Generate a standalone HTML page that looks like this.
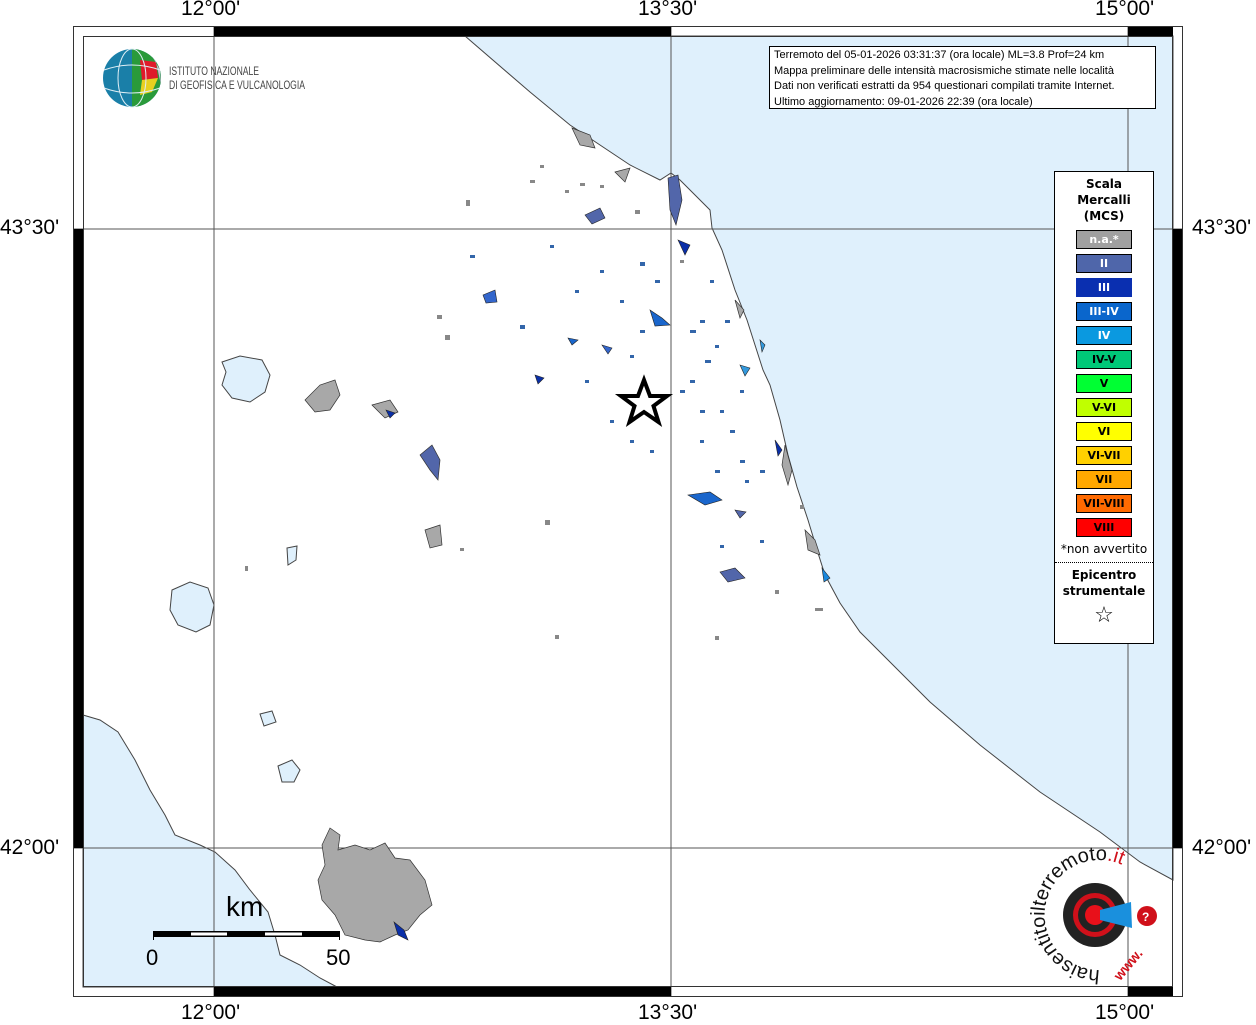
<!DOCTYPE html>
<html><head><meta charset="utf-8"><style>
body{margin:0;background:#fff;width:1256px;height:1024px;overflow:hidden;font-family:"Liberation Sans",sans-serif}
.lab{position:absolute;font-size:21px;color:#000}
.sw{width:56px;height:19px;margin:0 auto 5px;border:1px solid #000;box-sizing:border-box;line-height:17px}
</style></head><body>
<svg width="1256" height="1024" style="position:absolute;left:0;top:0">
<path d="M465,36 L1173,36 L1173,880 L1140,862 L1100,832 L1040,792 L980,745 L930,702 L890,662 L860,632 L840,603 L825,575 L818,553 L808,520 L797,487 L788,455 L780,420 L770,385 L763,370 L755,345 L747,320 L735,290 L722,250 L712,228 L710,210 L695,195 L680,180 L671,173 L660,180 L630,165 L600,145 L570,125 L530,92 Z" fill="#dff0fc" stroke="#444" stroke-width="1"/>
<path d="M83,715 L100,720 L118,732 L135,760 L150,790 L165,815 L175,835 L200,845 L215,852 L235,870 L250,890 L268,912 L275,935 L280,955 L300,965 L320,978 L337,987 L83,987 Z" fill="#dff0fc" stroke="#444" stroke-width="1"/>
<path d="M222,362 L240,356 L262,360 L270,375 L265,392 L250,402 L232,398 L222,385 L226,372 Z" fill="#dff0fc" stroke="#444"/>
<path d="M172,590 L190,582 L208,588 L214,605 L210,625 L196,632 L178,625 L170,610 Z" fill="#dff0fc" stroke="#444"/>
<path d="M260,714 L272,711 L276,722 L264,726 Z" fill="#dff0fc" stroke="#444"/>
<path d="M278,766 L292,760 L300,770 L294,782 L282,782 Z" fill="#dff0fc" stroke="#444"/>
<path d="M287,548 L297,546 L296,560 L288,565 Z" fill="#dff0fc" stroke="#444"/>
<g stroke="#555" stroke-width="1">
<line x1="214" y1="26" x2="214" y2="997"/><line x1="671" y1="26" x2="671" y2="997"/><line x1="1128" y1="26" x2="1128" y2="997"/>
<line x1="73" y1="229" x2="1183" y2="229"/><line x1="73" y1="848" x2="1183" y2="848"/>
</g>
<g fill="#a8a8a8" stroke="#333" stroke-width="0.7">
<path d="M330,828 L340,835 L338,850 L355,845 L370,850 L385,843 L395,858 L410,860 L425,880 L432,905 L420,915 L408,930 L395,935 L380,942 L365,940 L345,935 L335,915 L322,900 L318,880 L325,865 L322,845 Z"/>
<path d="M305,400 L320,385 L335,380 L340,395 L330,410 L315,412 Z"/>
<path d="M420,455 L432,445 L440,460 L438,480 L430,470 Z" fill="#5266aa"/>
<path d="M372,405 L390,400 L398,412 L385,418 Z"/>
<path d="M425,530 L440,525 L442,545 L430,548 Z"/>
<path d="M572,128 L590,135 L595,148 L580,145 Z"/>
<path d="M615,172 L630,168 L625,182 Z"/>
<path d="M785,445 L792,470 L788,485 L782,465 Z"/>
<path d="M805,530 L815,540 L820,555 L808,550 Z"/>
<path d="M735,300 L744,310 L740,318 Z"/>
</g>
<g stroke="#222" stroke-width="0.6">
<path d="M668,178 L678,175 L682,200 L676,225 L670,210 Z" fill="#5266aa"/>
<path d="M585,215 L600,208 L605,218 L592,224 Z" fill="#5266aa"/>
<path d="M483,295 L495,290 L497,302 L486,303 Z" fill="#3366cc"/>
<path d="M688,495 L710,492 L722,500 L705,505 Z" fill="#1a66cc"/>
<path d="M720,572 L735,568 L745,578 L728,582 Z" fill="#5266aa"/>
<path d="M650,310 L662,318 L670,325 L655,326 Z" fill="#1a66cc"/>
<path d="M678,240 L690,245 L685,255 Z" fill="#0a2fa8"/>
<path d="M740,365 L750,368 L745,376 Z" fill="#3399dd"/>
<path d="M822,568 L830,578 L824,582 Z" fill="#1a88dd"/>
<path d="M775,440 L782,450 L778,456 Z" fill="#0a2fa8"/>
<path d="M602,345 L612,348 L608,354 Z" fill="#3366cc"/>
<path d="M535,375 L544,378 L538,384 Z" fill="#0a2fa8"/>
<path d="M568,338 L578,340 L572,345 Z" fill="#1a66cc"/>
<path d="M735,510 L746,512 L740,518 Z" fill="#5266aa"/>
<path d="M386,410 L395,413 L390,418 Z" fill="#0a2fa8"/>
<path d="M394,922 L404,930 L408,940 L398,935 Z" fill="#0a2fa8"/>
<path d="M760,340 L765,345 L762,352 Z" fill="#3399dd"/>
</g>
<g fill="#3366aa">
<rect x="520" y="325" width="5" height="4"/><rect x="470" y="255" width="5" height="3"/><rect x="550" y="245" width="4" height="3"/>
<rect x="640" y="262" width="5" height="4"/><rect x="700" y="320" width="5" height="3"/><rect x="715" y="345" width="4" height="3"/>
<rect x="630" y="355" width="4" height="3"/><rect x="690" y="380" width="5" height="3"/><rect x="720" y="410" width="4" height="3"/>
<rect x="700" y="440" width="4" height="3"/><rect x="650" y="450" width="4" height="3"/><rect x="610" y="420" width="4" height="3"/>
<rect x="745" y="480" width="4" height="3"/><rect x="760" y="540" width="4" height="3"/><rect x="720" y="545" width="4" height="3"/>
<rect x="585" y="380" width="4" height="3"/><rect x="620" y="300" width="4" height="3"/><rect x="740" y="390" width="4" height="3"/>
<rect x="575" y="290" width="4" height="3"/><rect x="600" y="270" width="4" height="3"/><rect x="710" y="280" width="4" height="3"/>
<rect x="690" y="330" width="6" height="3"/><rect x="725" y="320" width="5" height="3"/><rect x="705" y="360" width="6" height="3"/>
<rect x="730" y="430" width="5" height="3"/><rect x="760" y="470" width="5" height="3"/><rect x="700" y="410" width="5" height="3"/>
<rect x="655" y="280" width="5" height="3"/><rect x="640" y="330" width="5" height="3"/><rect x="680" y="390" width="5" height="3"/>
<rect x="630" y="440" width="4" height="3"/><rect x="740" y="460" width="5" height="3"/><rect x="715" y="470" width="5" height="3"/>
</g>
<g fill="#888">
<rect x="545" y="520" width="5" height="5"/><rect x="466" y="200" width="4" height="6"/><rect x="445" y="335" width="5" height="5"/>
<rect x="437" y="315" width="5" height="4"/><rect x="540" y="165" width="4" height="3"/><rect x="565" y="190" width="4" height="3"/>
<rect x="635" y="210" width="5" height="4"/><rect x="800" y="505" width="4" height="4"/><rect x="775" y="590" width="4" height="4"/>
<rect x="815" y="608" width="8" height="3"/><rect x="555" y="635" width="4" height="4"/><rect x="715" y="636" width="4" height="4"/>
<rect x="245" y="566" width="3" height="5"/><rect x="460" y="548" width="4" height="3"/><rect x="680" y="260" width="4" height="3"/>
<rect x="530" y="180" width="5" height="3"/><rect x="580" y="183" width="5" height="3"/><rect x="600" y="185" width="4" height="3"/>
</g>
<path d="M644,380 L650,396 L667,396 L653.5,406 L658.5,422 L644,412 L629.5,422 L634.5,406 L621,396 L638,396 Z" fill="#fff" stroke="#000" stroke-width="4" stroke-linejoin="miter"/>
<rect x="73.5" y="26.5" width="1109" height="970" fill="none" stroke="#333"/>
<rect x="83.5" y="36.5" width="1089" height="950" fill="none" stroke="#333"/>
<g fill="#000">
<rect x="214" y="27" width="457" height="9"/><rect x="1128" y="27" width="45" height="9"/>
<rect x="214" y="987" width="457" height="9"/><rect x="1128" y="987" width="45" height="9"/>
<rect x="74" y="229" width="9" height="619"/><rect x="1173" y="229" width="9" height="619"/>
</g>
<rect x="153" y="931" width="187" height="6" fill="#000"/>
<rect x="191" y="932.5" width="36" height="3" fill="#fff"/><rect x="265" y="932.5" width="37" height="3" fill="#fff"/>
<line x1="153.5" y1="931" x2="153.5" y2="940" stroke="#000"/><line x1="339.5" y1="931" x2="339.5" y2="940" stroke="#000"/>
<text x="226" y="916" font-size="28" font-family="Liberation Sans">km</text>
<text x="146" y="965" font-size="22" font-family="Liberation Sans">0</text>
<text x="326" y="965" font-size="22" font-family="Liberation Sans">50</text>
<circle cx="132" cy="78" r="29" fill="#1a7fa8"/>
<path d="M132,49 A29,29 0 0 1 161,78 A29,29 0 0 1 132,107 Z" fill="#2a9a3a"/>
<path d="M140,60 L156,62 L158,78 L142,80 Z" fill="#e01a2a"/>
<path d="M142,80 L158,78 L152,92 L140,95 Z" fill="#e8d020"/>
<path d="M152,56 L160,70 L161,85 L156,62 Z" fill="#c8c0d8"/>
<g stroke="#dfeef5" stroke-width="1" fill="none"><ellipse cx="132" cy="78" rx="14" ry="29"/><path d="M104,70 Q132,60 160,70 M104,88 Q132,98 160,88"/></g>
<text x="169" y="75" font-size="12" fill="#444" font-family="Liberation Sans" textLength="90" lengthAdjust="spacingAndGlyphs">ISTITUTO NAZIONALE</text>
<text x="169" y="89" font-size="12" fill="#444" font-family="Liberation Sans" textLength="136" lengthAdjust="spacingAndGlyphs">DI GEOFISICA E VULCANOLOGIA</text>
<circle cx="1095" cy="915" r="32" fill="#222"/>
<circle cx="1095" cy="915" r="22" fill="#d0101a"/>
<circle cx="1095" cy="915" r="17" fill="#222"/>
<circle cx="1095" cy="915" r="10" fill="#e8101a"/>
<path d="M1100,910 L1131,902 L1132,928 L1100,920 Z" fill="#1a90dd"/>
<circle cx="1147" cy="916" r="10" fill="#d0101a"/>
<text x="1142" y="921" font-size="12" fill="#fff" font-weight="bold" font-family="Liberation Sans">?</text>
<path id="arc" d="M1100,970 A55,55 0 1 1 1150,893" fill="none"/>
<text font-size="20" font-family="Liberation Sans" fill="#111"><textPath href="#arc">haisentitoilterremoto<tspan fill="#d0101a">.it</tspan></textPath></text>
<text x="1100" y="972" font-size="14" fill="#d0101a" font-weight="bold" font-family="Liberation Sans" transform="rotate(-50 1120 955)">www.</text>
</svg>
<div class="lab" style="left:181px;top:-3px">12°00'</div>
<div class="lab" style="left:638px;top:-3px">13°30'</div>
<div class="lab" style="left:1095px;top:-3px">15°00'</div>
<div class="lab" style="left:181px;top:1001px">12°00'</div>
<div class="lab" style="left:638px;top:1001px">13°30'</div>
<div class="lab" style="left:1095px;top:1001px">15°00'</div>
<div class="lab" style="left:0;top:216px">43°30'</div>
<div class="lab" style="left:0;top:836px">42°00'</div>
<div class="lab" style="left:1192px;top:216px">43°30'</div>
<div class="lab" style="left:1192px;top:836px">42°00'</div>
<div style="position:absolute;left:769px;top:46px;width:387px;height:63px;border:1px solid #000;background:#fff;font-size:11px;line-height:15.5px;padding:1px 0 0 4px;box-sizing:border-box;white-space:nowrap;overflow:hidden">Terremoto del 05-01-2026 03:31:37 (ora locale) ML=3.8 Prof=24 km<br>Mappa preliminare delle intensità macrosismiche stimate nelle località<br>Dati non verificati estratti da 954 questionari compilati tramite Internet.<br>Ultimo aggiornamento: 09-01-2026 22:39 (ora locale)</div>
<div style="position:absolute;left:1054px;top:171px;width:100px;height:473px;border:1px solid #000;background:#fff;box-sizing:border-box;font-family:'DejaVu Sans',sans-serif;text-align:center">
<div style="font-size:12px;font-weight:bold;line-height:16px;margin-top:4px">Scala<br>Mercalli<br>(MCS)</div>
<div style="margin-top:6px;font-size:11px;font-weight:bold">
<div class="sw" style="background:#a0a0a0;color:#fff">n.a.*</div>
<div class="sw" style="background:#4f66aa;color:#fff">II</div>
<div class="sw" style="background:#0a2fb0;color:#fff;border-color:#0a2fb0">III</div>
<div class="sw" style="background:#0a66cc;color:#fff">III-IV</div>
<div class="sw" style="background:#0a99e0;color:#fff">IV</div>
<div class="sw" style="background:#00c878">IV-V</div>
<div class="sw" style="background:#00ff33">V</div>
<div class="sw" style="background:#c0ff00">V-VI</div>
<div class="sw" style="background:#ffff00">VI</div>
<div class="sw" style="background:#ffd000">VI-VII</div>
<div class="sw" style="background:#ffa800">VII</div>
<div class="sw" style="background:#ff6a00">VII-VIII</div>
<div class="sw" style="background:#ff0000">VIII</div>
</div>
<div style="font-size:12px;margin-top:5px">*non avvertito</div>
<div style="border-top:1px dotted #000;margin-top:6px"></div>
<div style="font-size:12px;font-weight:bold;line-height:16px;margin-top:4px">Epicentro<br>strumentale</div>
<div style="font-size:22px;line-height:22px;margin-top:6px">☆</div>
</div>
</body></html>
